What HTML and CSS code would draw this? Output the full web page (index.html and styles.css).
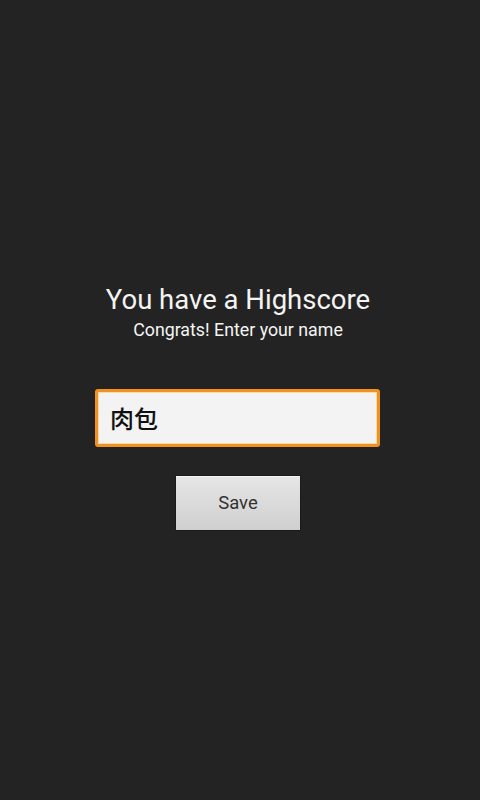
FILE: index.html
```html
<!DOCTYPE html>
<html>
<head>
<meta charset="utf-8">
<link rel="stylesheet" href="styles.css">
</head>
<body>
<div class="screen">
  <h1 class="title">You have a Highscore</h1>
  <p class="subtitle">Congrats! Enter your name</p>
  <div class="input">肉包</div>
  <button class="save">Save</button>
</div>
</body>
</html>
```
FILE: styles.css
```css
html, body {
  margin: 0;
  padding: 0;
  background: #232323;
}
.screen {
  width: 480px;
  height: 800px;
  box-sizing: border-box;
  padding-top: 282px;
  display: flex;
  flex-direction: column;
  align-items: center;
  font-family: Roboto, "Noto Sans CJK SC", sans-serif;
}
.title {
  margin: 0 0 0 -4px;
  font-weight: 400;
  font-size: 27.5px;
  line-height: 35px;
  color: #f4f4f4;
}
.subtitle {
  margin: 2px 0 0 -4px;
  font-size: 17.8px;
  line-height: 22px;
  color: #f4f4f4;
}
.input {
  margin-top: 48px;
  align-self: flex-start;
  margin-left: 95px;
  width: 285px;
  height: 58px;
  box-sizing: border-box;
  border: 3px solid #f0921f;
  border-radius: 3px;
  background: #f3f3f3;
  box-shadow: inset 0 0 0 1px #fbd9a8;
  padding-left: 12px;
  font-family: "Noto Sans CJK SC", sans-serif;
  font-size: 24px;
  font-weight: 500;
  line-height: 52px;
  color: #111;
}
.save {
  margin-top: 28px;
  margin-left: -4px;
  width: 126px;
  height: 56px;
  border: 1px solid #1a1a1a;
  border-radius: 1px;
  background: linear-gradient(#e6e6e6, #cfcfcf);
  box-shadow: inset 0 1px 0 #f4f4f4;
  font-family: Roboto, sans-serif;
  font-size: 18.5px;
  color: #333;
  padding: 0;
}
```
